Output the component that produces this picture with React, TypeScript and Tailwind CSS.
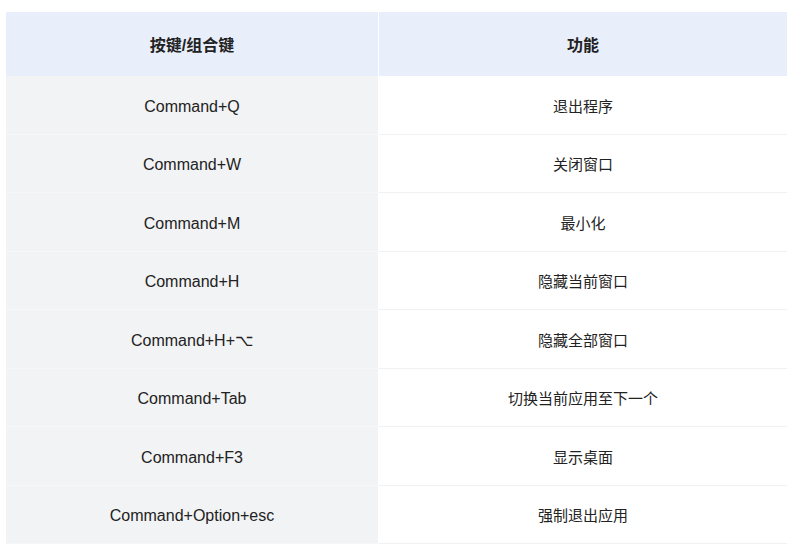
import React from "react";

const rows: [string, string][] = [
  ["Command+Q", "退出程序"],
  ["Command+W", "关闭窗口"],
  ["Command+M", "最小化"],
  ["Command+H", "隐藏当前窗口"],
  ["Command+H+⌥", "隐藏全部窗口"],
  ["Command+Tab", "切换当前应用至下一个"],
  ["Command+F3", "显示桌面"],
  ["Command+Option+esc", "强制退出应用"],
];

export default function App() {
  return (
    <div
      className="w-[800px] h-[550px] bg-white pt-[12px] pl-[6px] text-[#222]"
      style={{ fontFamily: '"Liberation Sans", Arial, "Noto Sans CJK SC", sans-serif' }}
    >
      <div className="grid w-[781px] grid-cols-[373px_1fr]">
        <div className="h-[64px] pt-[3px] flex items-center justify-center bg-[#e8eefa] border-r border-white text-[16px] font-bold">
          按键/组合键
        </div>
        <div className="h-[64px] pt-[3px] flex items-center justify-center bg-[#e8eefa] text-[16px] font-bold">
          功能
        </div>
        {rows.map(([k, v]) => (
          <React.Fragment key={k}>
            <div className="h-[58.5px] pt-[4px] flex items-center justify-center bg-[#f2f3f5] border-r border-white border-b border-b-[#f6f7f8] text-[16px]">
              {k}
            </div>
            <div className="h-[58.5px] pt-[4px] flex items-center justify-center bg-white border-b border-[#f0f1f2] text-[15px]">
              {v}
            </div>
          </React.Fragment>
        ))}
      </div>
    </div>
  );
}
